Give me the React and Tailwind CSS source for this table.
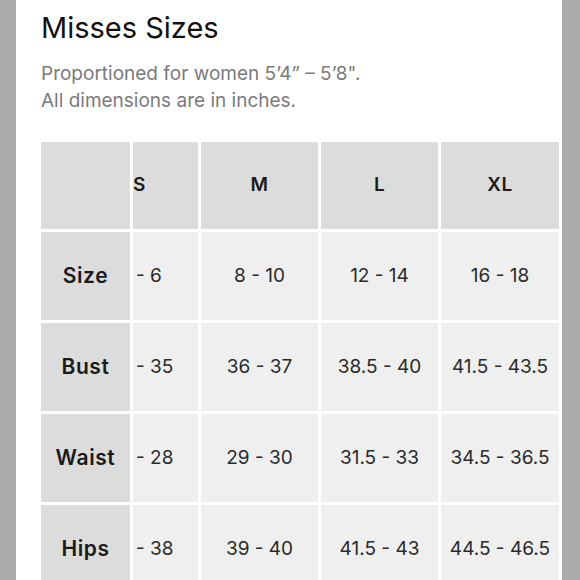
import React from "react";

const cols = ["M", "L", "XL"];
const rows = [
  ["Size", "- 6", "8 - 10", "12 - 14", "16 - 18"],
  ["Bust", "- 35", "36 - 37", "38.5 - 40", "41.5 - 43.5"],
  ["Waist", "- 28", "29 - 30", "31.5 - 33", "34.5 - 36.5"],
  ["Hips", "- 38", "39 - 40", "41.5 - 43", "44.5 - 46.5"],
];

export default function App() {
  return (
    <div
      className="w-[580px] h-[580px] overflow-hidden bg-[#ababab] flex"
      style={{ fontFamily: "Inter, 'Noto Sans', sans-serif" }}
    >
      <div className="ml-[16px] w-[546px] h-[700px] bg-white pl-[25px] pt-[10px]">
        <h1 className="text-[29px] leading-[36px] text-[#111] font-normal">Misses Sizes</h1>
        <p className="mt-[14px] text-[19px] leading-[27px] text-[#7a7a7a]">
          Proportioned for women 5’4” – 5’8".
          <br />
          All dimensions are in inches.
        </p>
        <div className="mt-[28px] grid grid-cols-[89px_65px_117px_117px_118px] grid-rows-[87px_88px_88px_88px_88px] gap-[3px] w-[519px]">
          <div className="bg-[#dcdcdc]" />
          <div className="bg-[#dcdcdc] flex items-center pl-[0px] text-[19px] font-semibold tracking-[0.5px] text-[#1a1a1a]">S</div>
          {cols.map((c) => (
            <div key={c} className="bg-[#dcdcdc] flex items-center justify-center text-[19px] font-semibold tracking-[0.5px] text-[#1a1a1a]">
              {c}
            </div>
          ))}
          {rows.map((r) => (
            <React.Fragment key={r[0]}>
              <div className="bg-[#dcdcdc] flex items-center justify-center text-[21px] font-semibold tracking-[0.6px] text-[#1a1a1a]">
                {r[0]}
              </div>
              <div className="bg-[#efefef] flex items-center pl-[3px] text-[19px] text-[#2a2a2a]">{r[1]}</div>
              {r.slice(2).map((v, i) => (
                <div key={i} className="bg-[#efefef] flex items-center justify-center text-[19px] text-[#2a2a2a]">
                  {v}
                </div>
              ))}
            </React.Fragment>
          ))}
        </div>
      </div>
    </div>
  );
}
